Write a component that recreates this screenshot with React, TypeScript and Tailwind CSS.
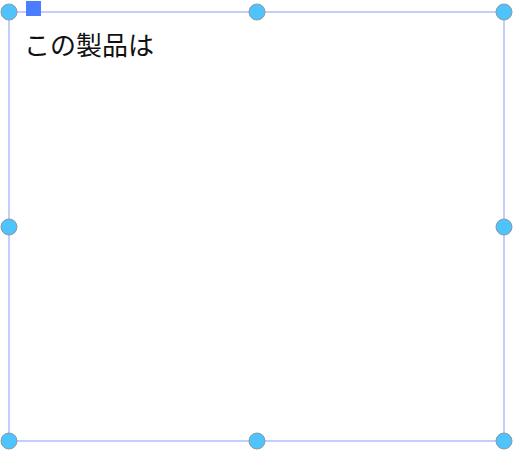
export default function App() {
    // handle positions as fractions of the frame
    const handles = [
        'left-0 top-0', 'left-1/2 top-0', 'left-full top-0',
        'left-0 top-1/2', 'left-full top-1/2',
        'left-0 top-full', 'left-1/2 top-full', 'left-full top-full',
    ];

    return (
        <div className="w-[514px] h-[451px] bg-white pl-[8px] pt-[11px]">
            <div className="relative w-[497px] h-[431px] border-2 border-[#c2cff8]">
                <p className="pt-[15px] pl-[14px] text-[26px] leading-[32px] text-[#111] font-['Noto_Sans_CJK_JP',sans-serif]">
                    この製品は
                </p>

                {/* selection handles sit on the centre of the frame line */}
                <div className="absolute -inset-[1px]">
                    <div className="absolute left-[17px] top-[-11px] w-[15px] h-[15px] bg-[#4a7dff]" />
                    {handles.map((h) => (
                        <span
                            key={h}
                            className={`absolute ${h} -translate-x-1/2 -translate-y-1/2 w-[17px] h-[17px] rounded-full bg-[#4ec3fc] border border-[#8a9aa6]`}
                        />
                    ))}
                </div>
            </div>
        </div>
    );
}
